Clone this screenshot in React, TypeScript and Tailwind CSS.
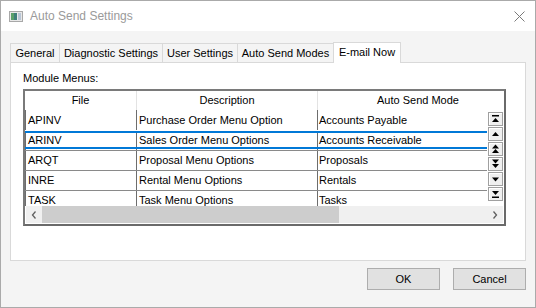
import React from "react";

const F = "font-['Liberation_Sans',Arial,sans-serif]";

function Tri({ kind }: { kind: string }) {
  const up = (y: number) => `1,${y + 4} 8,${y + 4} 4.5,${y}`;
  const dn = (y: number) => `1,${y} 8,${y} 4.5,${y + 4}`;
  return (
    <svg width="9" height="10" viewBox="0 0 9 10">
      {kind === "top" && (
        <>
          <rect x="1" y="1" width="7" height="1.5" fill="#000" />
          <polygon points={up(4)} fill="#000" />
        </>
      )}
      {kind === "up" && <polygon points={up(3)} fill="#000" />}
      {kind === "pgup" && (
        <>
          <polygon points={up(0.5)} fill="#000" />
          <polygon points={up(5)} fill="#000" />
        </>
      )}
      {kind === "pgdn" && (
        <>
          <polygon points={dn(0.5)} fill="#000" />
          <polygon points={dn(5)} fill="#000" />
        </>
      )}
      {kind === "down" && <polygon points={dn(3.5)} fill="#000" />}
      {kind === "bottom" && (
        <>
          <polygon points={dn(2)} fill="#000" />
          <rect x="1" y="7.5" width="7" height="1.5" fill="#000" />
        </>
      )}
    </svg>
  );
}

const rows = [
  ["APINV", "Purchase Order Menu Option", "Accounts Payable"],
  ["ARINV", "Sales Order Menu Options", "Accounts Receivable"],
  ["ARQT", "Proposal Menu Options", "Proposals"],
  ["INRE", "Rental Menu Options", "Rentals"],
  ["TASK", "Task Menu Options", "Tasks"],
];

const tabs = [
  ["General", "w-[49px]"],
  ["Diagnostic Settings", "w-[103px]"],
  ["User Settings", "w-[75px]"],
  ["Auto Send Modes", "w-[96px]"],
];

export default function App() {
  return (
    <div className={`${F} w-[536px] h-[308px] border border-[#aaaaaa] bg-[#f4f4f4] flex flex-col text-black overflow-hidden`}>
      {/* title bar */}
      <div className="h-[30px] bg-white flex items-center shrink-0">
        <svg width="14" height="11" viewBox="0 0 14 11" className="ml-[8px]">
          <rect x="0.5" y="0.5" width="13" height="10" fill="#e8e8e8" stroke="#a8a8a8" />
          <rect x="2" y="2" width="6" height="7" fill="#3f7f7a" />
          <rect x="2" y="2" width="3" height="7" fill="#5aa06a" />
          <rect x="9" y="2" width="3" height="7" fill="#b9c6d6" />
        </svg>
        <span className="ml-[7px] text-[12px] text-[#9a9a9a]">Auto Send Settings</span>
        <div className="flex-1" />
        <svg width="11" height="11" viewBox="0 0 11 11" className="mr-[10px]">
          <line x1="0.5" y1="0.5" x2="10.5" y2="10.5" stroke="#7a7a7a" strokeWidth="1" />
          <line x1="10.5" y1="0.5" x2="0.5" y2="10.5" stroke="#7a7a7a" strokeWidth="1" />
        </svg>
      </div>

      {/* tabs */}
      <div className="mt-[10px] ml-[9px] flex items-end h-[21px] text-[11px]">
        {tabs.map(([t, w]) => (
          <div
            key={t}
            className={`${w} h-[19px] border border-b-0 border-r-0 border-[#d9d9d9] flex items-center justify-center bg-[#f4f4f4]`}
          >
            {t}
          </div>
        ))}
        <div className="w-[68px] h-[21px] border border-b-0 border-[#d9d9d9] bg-white flex items-center justify-center relative top-[1px] z-10 pb-[2px]">
          E-mail Now
        </div>
      </div>

      {/* panel */}
      <div className="ml-[9px] w-[516px] h-[199px] border border-[#d9d9d9] bg-white flex flex-col">
        <div className="ml-[12px] mt-[9px] text-[11px] leading-[13px]">Module Menus:</div>
        <div className="ml-[12px] mt-[4px] w-[483px] h-[137px] border-2 border-t-[#7a7a7a] border-l-[#7a7a7a] border-r-[#6a6a6a] border-b-[#6a6a6a] bg-white flex flex-col text-[11px] overflow-hidden">
          {/* header */}
          <div className="h-[19px] flex shrink-0 overflow-hidden">
            <div className="w-[112px] shrink-0 border-r border-[#e3e3e3] flex items-center justify-center">File</div>
            <div className="w-[181px] shrink-0 border-r border-[#e3e3e3] flex items-center justify-center">Description</div>
            <div className="w-[200px] shrink-0 flex items-center justify-center">Auto Send Mode</div>
          </div>
          {/* body */}
          <div className="h-[96px] flex shrink-0">
            <div className="w-[462px] overflow-hidden flex flex-col">
              {rows.map((r, i) => (
                <div
                  key={r[0]}
                  className={`h-[20px] shrink-0 flex relative ${i > 1 ? "border-t border-[#8a8a8a]" : ""} ${i === 1 ? "pt-[1px]" : ""}`}
                >
                  {i === 1 && (
                    <>
                      <div className="absolute left-0 right-0 top-[1px] h-[2px] bg-[#0078d7]" />
                      <div className="absolute left-0 right-0 bottom-[1px] h-[2px] bg-[#0078d7]" />
                    </>
                  )}
                  <div className="w-[112px] shrink-0 border-r border-l border-[#6d6d6d] flex items-center pl-[2px]">{r[0]}</div>
                  <div className="w-[181px] shrink-0 border-r border-[#6d6d6d] flex items-center pl-[2px]">{r[1]}</div>
                  <div className="w-[200px] shrink-0 flex items-center pl-[1px]">{r[2]}</div>
                </div>
              ))}
            </div>
            <div className="w-[17px] flex flex-col items-center pt-[2px] gap-[1px]">
              {["top", "up", "pgup", "pgdn", "down", "bottom"].map((k) => (
                <div
                  key={k}
                  className="w-[15px] h-[14px] border border-[#a0a0a0] bg-[#efefef] flex items-center justify-center shadow-[inset_1px_1px_0_#ffffff]"
                >
                  <Tri kind={k} />
                </div>
              ))}
            </div>
          </div>
          {/* h scrollbar */}
          <div className="h-[17px] ml-[1px] mr-[1px] bg-[#f0f0f0] flex items-center shrink-0">
            <div className="w-[16px] flex justify-center">
              <svg width="6" height="8" viewBox="0 0 6 8">
                <polyline points="4.5,0.5 1.5,4 4.5,7.5" fill="none" stroke="#606060" strokeWidth="1.3" />
              </svg>
            </div>
            <div className="w-[297px] h-[17px] bg-[#cdcdcd]" />
            <div className="flex-1" />
            <div className="w-[16px] flex justify-center">
              <svg width="6" height="8" viewBox="0 0 6 8">
                <polyline points="1.5,0.5 4.5,4 1.5,7.5" fill="none" stroke="#606060" strokeWidth="1.3" />
              </svg>
            </div>
          </div>
        </div>
      </div>

      {/* footer */}
      <div className="flex justify-end gap-[13px] mr-[9px] mt-[7px] text-[11px]">
        <button className="w-[73px] h-[22px] border border-[#adadad] bg-[#e1e1e1] flex items-center justify-center">OK</button>
        <button className="w-[73px] h-[22px] border border-[#adadad] bg-[#e1e1e1] flex items-center justify-center">Cancel</button>
      </div>
    </div>
  );
}
